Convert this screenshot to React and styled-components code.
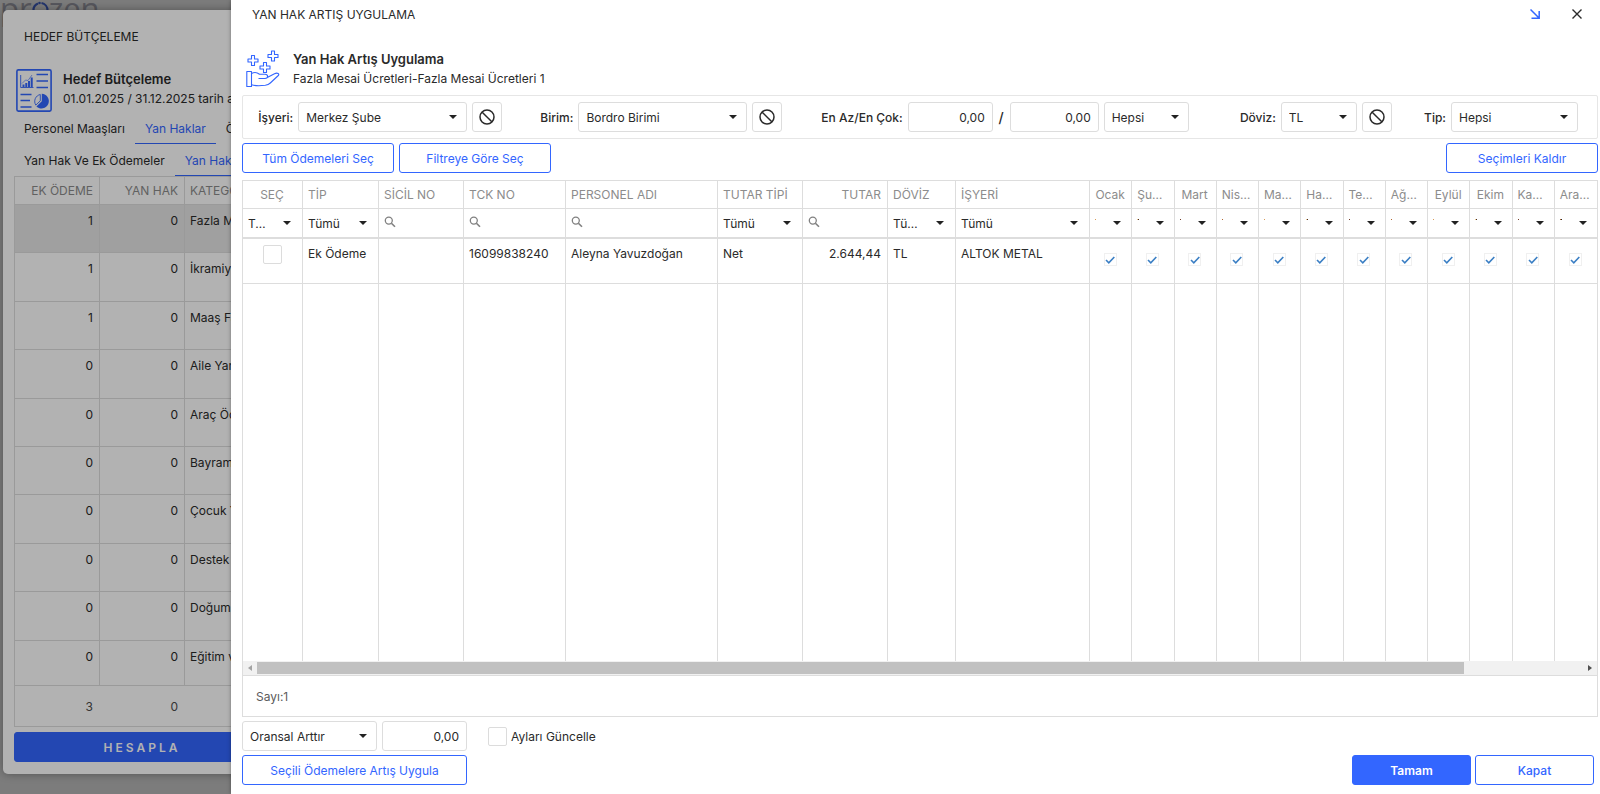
import React from "react";
import styled, { createGlobalStyle, css } from "styled-components";

const blue = "#3366ff";
const ink = "#2a2a2a";
const line = "#dddddd";

const GlobalStyle = createGlobalStyle`
  *, *::before, *::after { box-sizing: border-box; }
  body { margin: 0; }
  body, button, input, select {
    font-family: Inter, "Noto Sans", sans-serif;
    font-size: 12px;
    color: ${ink};
  }
`;

/* ---------- shell ---------- */

const Page = styled.div`
  position: relative;
  height: 100vh;
  min-height: 640px;
  overflow: hidden;
  background: #fff;
`;

const Brand = styled.div`
  position: absolute;
  top: -12px;
  left: 0;
  display: flex;
  align-items: center;
  font: 31px/40px "Open Sans", sans-serif;
  color: #b4b4c0;
`;

const BackDialog = styled.section`
  position: absolute;
  inset: 10px 20px 20px 3px;
  display: flex;
  flex-direction: column;
  padding: 12px 11px;
  border-radius: 5px;
  background: #fff;
  box-shadow: 0 0 8px rgba(0, 0, 0, 0.35);
`;

const Backdrop = styled.div`
  position: absolute;
  inset: 0;
  background: rgba(0, 0, 0, 0.3);
`;

const Modal = styled.section`
  position: absolute;
  inset: 0 0 0 231px;
  display: flex;
  flex-direction: column;
  padding: 0 2px 9px 11px;
  background: #fff;
  box-shadow: 0 0 4px rgba(0, 0, 0, 0.35);
`;

const TitleBar = styled.header`
  display: flex;
  align-items: center;
  justify-content: space-between;
  height: 28px;
  padding: 0 10px;
`;

const TitleText = styled.h1`
  margin: 0;
  font-size: 12px;
  font-weight: 400;
`;

const TitleActions = styled.div`
  display: flex;
  gap: 20px;
`;

const IconButton = styled.button`
  display: grid;
  place-items: center;
  width: 22px;
  height: 22px;
  padding: 0;
  border: 0;
  background: none;
  color: ${(p) => (p.$accent ? blue : ink)};
`;

const Heading = styled.div`
  display: flex;
  align-items: ${(p) => p.$align || "center"};
  gap: ${(p) => p.$gap}px;
  padding: ${(p) => p.$pad};
`;

const HeadingTitle = styled.h2`
  margin: 0;
  font-size: 13px;
  line-height: 20px;
  font-weight: 600;
`;

const HeadingSub = styled.p`
  margin: 0;
  line-height: 20px;
  white-space: nowrap;
`;

/* ---------- controls ---------- */

const Button = styled.button`
  width: ${(p) => p.$w}px;
  height: 30px;
  padding: 0;
  border: 1px solid ${blue};
  border-radius: 3px;
  background: ${(p) => (p.$solid ? blue : "#fff")};
  color: ${(p) => (p.$solid ? "#fff" : blue)};
  font-weight: ${(p) => p.$weight || 400};
`;

const CalcButton = styled(Button)`
  flex: none;
  margin-top: 5px;
  letter-spacing: 3px;
`;

const SelectBox = styled.span`
  position: relative;
  display: block;
  width: ${(p) => (p.$w ? p.$w + "px" : "100%")};

  &::after {
    content: "";
    position: absolute;
    top: 50%;
    right: ${(p) => (p.$w || p.$sliver ? 10 : 11)}px;
    margin-top: -2px;
    border: 4px solid transparent;
    border-top-color: #222;
    border-bottom: 0;
    pointer-events: none;
  }
`;

const SelectField = styled.select`
  appearance: none;
  display: block;
  width: 100%;
  height: ${(p) => (p.$plain ? 28 : 30)}px;
  padding: 0 ${(p) => (p.$sliver ? 35 : p.$plain ? 34 : 22)}px 0 ${(p) => (p.$plain ? 5 : 7)}px;
  border: ${(p) => (p.$plain ? "0" : "1px solid " + line)};
  border-radius: ${(p) => (p.$plain ? 0 : 3)}px;
  background: transparent;
  overflow: hidden;
  white-space: nowrap;
  text-overflow: ${(p) => (p.$sliver ? "clip" : "ellipsis")};
`;

const AmountField = styled.input`
  width: ${(p) => p.$w}px;
  height: 30px;
  padding: 0 7px;
  border: 1px solid ${line};
  border-radius: 3px;
  text-align: right;
`;

const ClearButton = styled.button`
  display: grid;
  place-items: center;
  width: 30px;
  height: 30px;
  padding: 0;
  border: 1px solid ${line};
  border-radius: 3px;
  background: #fff;
`;

const CheckField = styled.input`
  appearance: none;
  display: block;
  width: 19px;
  height: 19px;
  margin: ${(p) => (p.$cell ? "0 auto" : "0")};
  border: 1px solid #dcdcdc;
  border-radius: 2px;
  background: #fff;
`;

const CheckLabel = styled.label`
  display: flex;
  align-items: center;
  gap: 4px;
  margin-left: 16px;
`;

/* ---------- filter panel ---------- */

const Filters = styled.div`
  display: grid;
  grid-template-columns: 259fr 280fr 406fr 203fr 186fr;
  padding: 6px 19px 6px 0;
  border: 1px solid #e6e6e6;
  border-radius: 2px;
`;

const FilterGroup = styled.div`
  display: flex;
  align-items: center;
  justify-content: flex-end;
  gap: 5px;
`;

const FilterLabel = styled.label`
  font-weight: 500;
  white-space: nowrap;
`;

const Slash = styled.span`
  width: 7px;
  font-size: 14px;
  text-align: center;
  font-weight: 500;
`;

const ButtonRow = styled.div`
  display: flex;
  align-items: center;
  gap: ${(p) => (p.$end ? 4 : 5)}px;
  margin-top: 4px;
  padding-right: ${(p) => p.$end || 0}px;
`;

const Spacer = styled.span`
  flex: 1;
`;

/* ---------- data grid ---------- */

const GridFrame = styled.div`
  flex: 1;
  min-height: 0;
  display: flex;
  flex-direction: column;
  margin-top: ${(p) => p.$top}px;
  border: 1px solid ${line};
`;

const GridBody = styled.div`
  flex: 1;
  min-height: 0;
  overflow: hidden;
`;

const Table = styled.table`
  width: 100%;
  height: ${(p) => p.$h || "100%"};
  border-collapse: separate;
  border-spacing: 0;
  table-layout: fixed;
`;

const cell = css`
  padding: 0 6px 0 5px;
  border-right: 1px solid ${line};
  text-align: ${(p) => p.$align || "left"};
  overflow: hidden;
  text-overflow: ellipsis;
  white-space: nowrap;
  &:last-child { border-right: 0; }
`;

const Th = styled.th`
  ${cell}
  height: 28px;
  border-bottom: 1px solid ${line};
  color: #8c8c8c;
  font-weight: 400;
`;

const FilterTd = styled.td`
  ${cell}
  height: 30px;
  padding: 0;
  border-bottom: 2px solid ${line};
`;

const Td = styled.td`
  ${cell}
  height: ${(p) => (p.$auto ? "auto" : "45px")};
  padding-top: ${(p) => (p.$auto ? 0 : 6)}px;
  border-bottom: ${(p) => (p.$auto ? "0" : "1px solid " + line)};
  vertical-align: top;
  line-height: 18px;
`;

const BudgetTd = styled(Td)`
  padding-top: 7px;
  background: ${(p) => (p.$selected ? "#e6e6e6" : "transparent")};
`;

const SearchBox = styled.label`
  display: flex;
  align-items: center;
  height: 28px;
  padding: 0 5px 2px;
  color: #808080;
`;

const SearchField = styled.input`
  flex: 1;
  min-width: 0;
  border: 0;
  padding: 0 4px;
  outline: 0;
  background: none;
`;

const MonthCheck = styled.span`
  display: grid;
  place-items: center;
  width: 13px;
  height: 13px;
  margin: 8px auto 0;
  border: 1px solid #f0f0f0;
`;

const ScrollTrack = styled.div`
  display: flex;
  align-items: center;
  height: 15px;
  background: #f1f1f1;
  border-bottom: 1px solid ${line};
`;

const ScrollArrow = styled.span`
  width: 14px;
  display: grid;
  place-items: center;
  color: ${(p) => (p.$dim ? "#a3a3a3" : "#505050")};
`;

const ScrollRail = styled.div`
  flex: 1;
`;

const ScrollThumb = styled.div`
  width: 91%;
  height: 12px;
  background: #c1c1c1;
`;

const CountBar = styled.footer`
  display: flex;
  align-items: center;
  height: 40px;
  padding: 0 13px;
  color: #5c5c5c;
`;

const TotalsBar = styled.footer`
  display: grid;
  grid-template-columns: 85px 85px;
  align-items: center;
  height: 41px;
  border-top: 1px solid ${line};
  color: #4c4c4c;
  text-align: right;

  span { padding-right: 7px; }
`;

/* ---------- tabs ---------- */

const Tabs = styled.nav`
  display: flex;
  height: 32px;
`;

const Tab = styled.a`
  padding: 2px 10px 0;
  border-bottom: 1px solid ${(p) => (p.$active ? blue : "transparent")};
  color: ${(p) => (p.$active ? blue : ink)};
  line-height: 29px;
  white-space: nowrap;
  text-decoration: none;
`;

/* ---------- drawings ---------- */

const Svg = ({ size = 16, h, box = "0 0 16 16", children, ...rest }) => (
  <svg width={size} height={h || size} viewBox={box} fill="none" stroke="currentColor" aria-hidden="true" {...rest}>
    {children}
  </svg>
);

const BanIcon = () => (
  <Svg strokeWidth="1.5">
    <circle cx="8" cy="8" r="7" />
    <path d="M3.2 3.2l9.6 9.6" />
  </Svg>
);

const SearchIcon = () => (
  <Svg size={12} box="0 0 12 12" strokeWidth="1.3">
    <circle cx="4.8" cy="4.6" r="3.5" />
    <path d="M7.4 7.2l3.6 3.6" strokeWidth="1.6" />
  </Svg>
);

const ReportIcon = () => (
  <Svg size={36} h={43} box="0 0 36 43" stroke={blue} strokeWidth="1.6">
    <rect x="0.9" y="0.9" width="34.2" height="41.2" rx="1.5" />
    <path d="M20.500 5.500H32M20.500 12H32M20.500 18.500H32M4.500 25.500h11M4.500 31.500h9.500M4.500 38h11" />
    <path d="M4.700 6v12.500H17.500" strokeWidth="0.9" />
    <path d="M7.500 18v-2.500M10.300 18v-4M13 18v-6M15.700 18V8.500" strokeWidth="2" />
    <path d="M6 14.500l3.500-3.500 2.500.5 4-5.500" strokeWidth="0.6" />
    <path d="M24.300 25.500v6.300l-4.500 4.300A7 7 0 0 1 24.300 25.500z" strokeWidth="0.9" />
    <path d="M25.800 24.700v7.600l-5.400 5.200A7.400 7.400 0 1 0 25.800 24.700z" fill={blue} stroke="none" />
  </Svg>
);

const cross = (x, y) =>
  `M${x - 1.5} ${y - 5}h3v3.500h3.500v3h-3.500v3.500h-3v-3.500h-3.500v-3h3.500z`;

const HandIcon = () => (
  <Svg size={34} h={38} box="0 0 34 38" stroke={blue} strokeWidth="1.1" strokeLinejoin="round">
    <path d={cross(7, 10.5)} />
    <path d={cross(27, 6)} />
    <path d={cross(19, 17.5)} />
    <path d="M0.800 21.500h4.700v15H0.800z" />
    <path d="M5.500 23.500c3-1.600 5.500-1.200 8 .7h5.500c3.500 0 3.500 4.300 0 4.300h-6.500M21.300 27.500l7.200-3.800c3-1.400 5.300.2 3.800 1.800l-8 7.500c-1.500 1.500-3 2-5 2.300-4.500.5-9 1-13.800-.5" />
  </Svg>
);

const LogoO = () => (
  <Svg size={17} h={20} box="0 0 17 20" strokeWidth="2.2">
    <path d="M1.500 13A7.500 7.500 0 0 1 6 5.500M9.500 5a7.500 7.500 0 0 1 6 7.500" stroke="#4a6ee0" />
    <circle cx="7.500" cy="5" r="1.300" fill="#4a6ee0" stroke="none" />
    <path d="M1.500 13c1 6 13 7 14 0" />
  </Svg>
);

/* ---------- composed parts ---------- */

const Picker = ({ w, value, $sliver, ...rest }) => (
  <SelectBox $w={w} $sliver={$sliver}>
    <SelectField $plain={!w} $sliver={$sliver} defaultValue={value} {...rest}>
      <option>{value}</option>
    </SelectField>
  </SelectBox>
);

const Clear = ({ label }) => (
  <ClearButton type="button" aria-label={label}>
    <BanIcon />
  </ClearButton>
);

const columns = [
  { title: "SEÇ", w: 60, align: "center", filter: "list" },
  { title: "TİP", w: 76, filter: "list", value: "Ek Ödeme" },
  { title: "SİCİL NO", w: 85, filter: "search", value: "" },
  { title: "TCK NO", w: 102, filter: "search", value: "16099838240" },
  { title: "PERSONEL ADI", w: 152, filter: "search", value: "Aleyna Yavuzdoğan" },
  { title: "TUTAR TİPİ", w: 85, filter: "list", value: "Net" },
  { title: "TUTAR", w: 85, align: "right", filter: "search", value: "2.644,44" },
  { title: "DÖVİZ", w: 68, filter: "list", value: "TL" },
  { title: "İŞYERİ", w: 134, filter: "list", value: "ALTOK METAL" },
];

const months = [
  "Ocak", "Şubat", "Mart", "Nisan", "Mayıs", "Haziran",
  "Temmuz", "Ağustos", "Eylül", "Ekim", "Kasım", "Aralık",
];

const budgetRows = [
  [1, 0, "Fazla Mesai"],
  [1, 0, "İkramiye"],
  [1, 0, "Maaş Farkı"],
  [0, 0, "Aile Yardımı"],
  [0, 0, "Araç Ödemesi"],
  [0, 0, "Bayram"],
  [0, 0, "Çocuk Yardımı"],
  [0, 0, "Destek"],
  [0, 0, "Doğum"],
  [0, 0, "Eğitim ve"],
];

function BudgetDialog() {
  return (
    <BackDialog>
      <TitleBar>
        <TitleText>HEDEF BÜTÇELEME</TitleText>
      </TitleBar>
      <Heading $gap={11} $pad="19px 0 0 2px" $align="flex-start">
        <ReportIcon />
        <div>
          <HeadingTitle>Hedef Bütçeleme</HeadingTitle>
          <HeadingSub>01.01.2025 / 31.12.2025 tarih aralığı</HeadingSub>
        </div>
      </Heading>
      <Tabs>
        <Tab href="#maas">Personel Maaşları</Tab>
        <Tab href="#yanhak" $active>Yan Haklar</Tab>
        <Tab href="#ozet">Özet</Tab>
      </Tabs>
      <Tabs>
        <Tab href="#odemeler">Yan Hak Ve Ek Ödemeler</Tab>
        <Tab href="#kategori" $active>Yan Hak Kategorileri</Tab>
      </Tabs>
      <GridFrame $top={0}>
        <GridBody>
          <Table $h="512px">
            <colgroup>
              <col style={{ width: 85 }} />
              <col style={{ width: 85 }} />
              <col />
            </colgroup>
            <thead>
              <tr>
                <Th $align="right">EK ÖDEME</Th>
                <Th $align="right">YAN HAK</Th>
                <Th>KATEGORİ</Th>
              </tr>
            </thead>
            <tbody>
              {budgetRows.map(([extra, benefit, name], i) => (
                <tr key={name}>
                  <BudgetTd $align="right" $selected={i === 0}>{extra}</BudgetTd>
                  <BudgetTd $align="right" $selected={i === 0}>{benefit}</BudgetTd>
                  <BudgetTd $selected={i === 0}>{name}</BudgetTd>
                </tr>
              ))}
            </tbody>
          </Table>
        </GridBody>
        <TotalsBar>
          <span>3</span>
          <span>0</span>
        </TotalsBar>
      </GridFrame>
      <CalcButton type="button" $solid $weight={600} $w={256}>HESAPLA</CalcButton>
    </BackDialog>
  );
}

function PaymentsTable() {
  return (
    <Table>
      <colgroup>
        {columns.map((c) => <col key={c.title} style={{ width: c.w }} />)}
        {months.map((m) => <col key={m} />)}
      </colgroup>
      <thead>
        <tr>
          {columns.map((c) => <Th key={c.title} $align={c.align}>{c.title}</Th>)}
          {months.map((m) => <Th key={m} $align="center">{m}</Th>)}
        </tr>
        <tr>
          {columns.map((c) => (
            <FilterTd key={c.title}>
              {c.filter === "list" ? (
                <Picker value="Tümü" aria-label={c.title} />
              ) : (
                <SearchBox>
                  <SearchIcon />
                  <SearchField aria-label={c.title} />
                </SearchBox>
              )}
            </FilterTd>
          ))}
          {months.map((m) => (
            <FilterTd key={m}>
              <Picker value="Tümü" aria-label={m} $sliver />
            </FilterTd>
          ))}
        </tr>
      </thead>
      <tbody>
        <tr>
          {columns.map((c) => (
            <Td key={c.title} $align={c.align}>
              {c.value === undefined ? <CheckField $cell type="checkbox" aria-label="Seç" /> : c.value}
            </Td>
          ))}
          {months.map((m) => (
            <Td key={m}>
              <MonthCheck>
                <Svg size={10} box="0 0 10 10" stroke="#3b7fc4" strokeWidth="1.6">
                  <path d="M1 5l2.800 2.800L9.300 2" />
                </Svg>
              </MonthCheck>
            </Td>
          ))}
        </tr>
        <tr>
          {[...columns, ...months].map((_, i) => <Td key={i} $auto />)}
        </tr>
      </tbody>
    </Table>
  );
}

export default function App() {
  return (
    <Page>
      <GlobalStyle />
      <Brand>pr<LogoO />zen</Brand>
      <Backdrop />
      <BudgetDialog />
      <Backdrop />
      <Modal role="dialog">
        <TitleBar>
          <TitleText>YAN HAK ARTIŞ UYGULAMA</TitleText>
          <TitleActions>
            <IconButton type="button" $accent aria-label="Küçült">
              <Svg size={10} box="0 0 10 10" strokeWidth="1.5">
                <path d="M0.500 0.500l8.500 8.500M9.200 2v7.200H1.500" />
              </Svg>
            </IconButton>
            <IconButton type="button" aria-label="Pencereyi kapat">
              <Svg size={10} box="0 0 10 10" strokeWidth="1.4">
                <path d="M0.500 0.500l9 9M9.500 0.500l-9 9" />
              </Svg>
            </IconButton>
          </TitleActions>
        </TitleBar>
        <Heading $gap={13} $pad="21px 0 6px 4px">
          <HandIcon />
          <div>
            <HeadingTitle>Yan Hak Artış Uygulama</HeadingTitle>
            <HeadingSub>Fazla Mesai Ücretleri-Fazla Mesai Ücretleri 1</HeadingSub>
          </div>
        </Heading>

        <Filters>
          <FilterGroup>
            <FilterLabel htmlFor="isyeri">İşyeri:</FilterLabel>
            <Picker id="isyeri" w={169} value="Merkez Şube" />
            <Clear label="İşyerini temizle" />
          </FilterGroup>
          <FilterGroup>
            <FilterLabel htmlFor="birim">Birim:</FilterLabel>
            <Picker id="birim" w={169} value="Bordro Birimi" />
            <Clear label="Birimi temizle" />
          </FilterGroup>
          <FilterGroup>
            <FilterLabel htmlFor="enaz">En Az/En Çok:</FilterLabel>
            <AmountField id="enaz" $w={85} defaultValue="0,00" />
            <Slash>/</Slash>
            <AmountField $w={89} defaultValue="0,00" aria-label="En Çok" />
            <Picker w={85} value="Hepsi" aria-label="Aralık tipi" />
          </FilterGroup>
          <FilterGroup>
            <FilterLabel htmlFor="doviz">Döviz:</FilterLabel>
            <Picker id="doviz" w={76} value="TL" />
            <Clear label="Dövizi temizle" />
          </FilterGroup>
          <FilterGroup>
            <FilterLabel htmlFor="tip">Tip:</FilterLabel>
            <Picker id="tip" w={127} value="Hepsi" />
          </FilterGroup>
        </Filters>

        <ButtonRow>
          <Button type="button" $w={152}>Tüm Ödemeleri Seç</Button>
          <Button type="button" $w={152}>Filtreye Göre Seç</Button>
          <Spacer />
          <Button type="button" $w={152}>Seçimleri Kaldır</Button>
        </ButtonRow>

        <GridFrame $top={7}>
          <GridBody>
            <PaymentsTable />
          </GridBody>
          <ScrollTrack>
            <ScrollArrow $dim>
              <Svg size={4} h={6} box="0 0 4 6" stroke="none"><path d="M4 0v6L0 3z" fill="currentColor" /></Svg>
            </ScrollArrow>
            <ScrollRail><ScrollThumb /></ScrollRail>
            <ScrollArrow>
              <Svg size={4} h={6} box="0 0 4 6" stroke="none"><path d="M0 0v6l4-3z" fill="currentColor" /></Svg>
            </ScrollArrow>
          </ScrollTrack>
          <CountBar>Sayı:1</CountBar>
        </GridFrame>

        <ButtonRow>
          <Picker w={135} value="Oransal Arttır" aria-label="Artış türü" />
          <AmountField $w={85} defaultValue="0,00" aria-label="Artış oranı" />
          <CheckLabel>
            <CheckField type="checkbox" />
            Ayları Güncelle
          </CheckLabel>
        </ButtonRow>
        <ButtonRow $end={4}>
          <Button type="button" $w={225}>Seçili Ödemelere Artış Uygula</Button>
          <Spacer />
          <Button type="button" $solid $weight={600} $w={119}>Tamam</Button>
          <Button type="button" $weight={500} $w={119}>Kapat</Button>
        </ButtonRow>
      </Modal>
    </Page>
  );
}
